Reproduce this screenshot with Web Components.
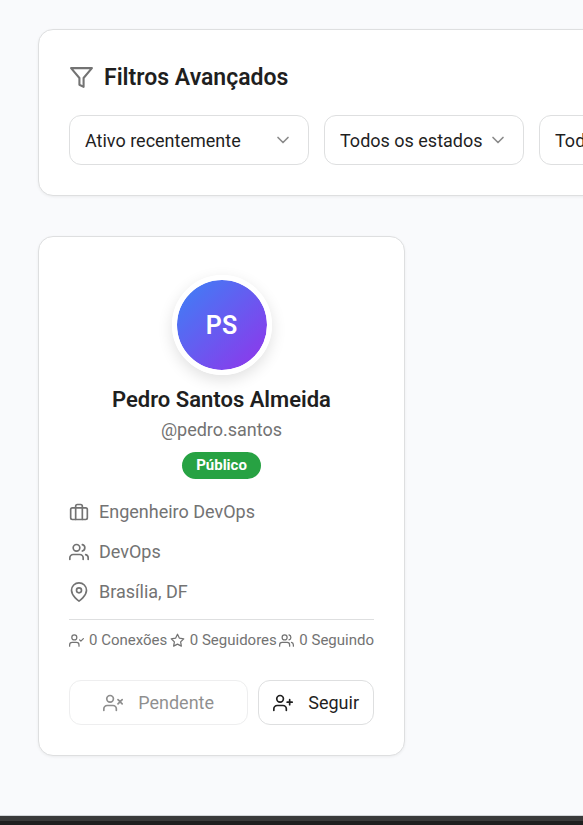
<!DOCTYPE html>
<html lang="pt-BR">
<head>
<meta charset="utf-8">
<meta name="viewport" content="width=device-width, initial-scale=1">
<title>Filtros Avançados</title>
<style>
  html { background: #f9fafc; }
  body {
    margin: 0;
    min-height: 100vh;
    display: flex;
    flex-direction: column;
    overflow: hidden;
    font: 18px/27px Roboto, "Liberation Sans", sans-serif;
    color: #1f1f1f;
    --muted: #737373;
    --line: #dedfe0;
    --surface: #ffffff;
    --success: #27a243;
  }
  main {
    display: flex;
    flex-direction: column;
    align-items: flex-start;
    gap: 40px;
    padding: 29px 38px 59px;
  }
</style>
</head>
<body>
<main>
  <filter-panel heading="Filtros Avançados">
    <filter-select wide label="Ordenação" value="Ativo recentemente"></filter-select>
    <filter-select label="Estado" value="Todos os estados"></filter-select>
    <filter-select label="Área" value="Todos"></filter-select>
  </filter-panel>
  <profile-card initials="PS">
    <span slot="name">Pedro Santos Almeida</span>
    <span slot="handle">@pedro.santos</span>
    <span slot="badge">Público</span>
    <info-row slot="info" icon="briefcase">Engenheiro DevOps</info-row>
    <info-row slot="info" icon="users">DevOps</info-row>
    <info-row slot="info" icon="pin">Brasília, DF</info-row>
    <info-row slot="stats" small icon="user-check">0 Conexões</info-row>
    <info-row slot="stats" small icon="star">0 Seguidores</info-row>
    <info-row slot="stats" small icon="users">0 Seguindo</info-row>
    <action-button slot="actions" grow disabled icon="user-x">Pendente</action-button>
    <action-button slot="actions" icon="user-plus">Seguir</action-button>
  </profile-card>
</main>
<page-footer></page-footer>

<script>
const person = '<path d="M16 21v-2a4 4 0 0 0-4-4H5a4 4 0 0 0-4 4v2"/><circle cx="8.5" cy="7" r="4"/>';
const ICONS = {
  filter: '<polygon points="22 3 2 3 10 12.46 10 19 14 21 14 12.46 22 3"/>',
  chevron: '<polyline points="6 9 12 15 18 9"/>',
  briefcase: '<rect x="2" y="7" width="20" height="14" rx="2"/><path d="M16 21V5a2 2 0 0 0-2-2h-4a2 2 0 0 0-2 2v16"/>',
  users: '<path d="M17 21v-2a4 4 0 0 0-4-4H5a4 4 0 0 0-4 4v2"/><circle cx="9" cy="7" r="4"/><path d="M23 21v-2a4 4 0 0 0-3-3.87M16 3.13a4 4 0 0 1 0 7.75"/>',
  pin: '<path d="M21 10c0 7-9 13-9 13s-9-6-9-13a9 9 0 0 1 18 0z"/><circle cx="12" cy="10" r="3"/>',
  star: '<polygon points="12 2 15.09 8.26 22 9.27 17 14.14 18.18 21.02 12 17.77 5.82 21.02 7 14.14 2 9.27 8.91 8.26 12 2"/>',
  'user-check': person + '<polyline points="17 11 19 13 23 9"/>',
  'user-x': person + '<path d="M18 8l5 5M23 8l-5 5"/>',
  'user-plus': person + '<path d="M20 8v6M23 11h-6"/>'
};

class Base extends HTMLElement {
  connectedCallback() {
    if (!this.shadowRoot) this.attachShadow({ mode: 'open' }).innerHTML = this.render();
  }
  attr(name) { return this.getAttribute(name) || ''; }
}

customElements.define('line-icon', class extends Base {
  render() {
    return `<style>
      :host { display: block; flex: none; width: var(--size, 20px); height: var(--size, 20px); }
      svg { display: block; width: 100%; height: 100%; fill: none; stroke: currentColor; stroke-width: 2; stroke-linecap: round; stroke-linejoin: round; }
    </style><svg viewBox="0 0 24 24" aria-hidden="true">${ICONS[this.attr('name')]}</svg>`;
  }
});

customElements.define('filter-panel', class extends Base {
  render() {
    return `<style>
      :host { display: flex; flex-direction: column; gap: 20px; padding: 30px; width: max-content;
        background: var(--surface); border: 1px solid var(--line); border-radius: 15px; box-shadow: 0 1px 3px rgba(0,0,0,.06); }
      header { display: flex; align-items: center; gap: 10px; }
      line-icon { --size: 25px; color: var(--muted); }
      h2 { margin: 0; font-size: 23px; line-height: 35px; font-weight: 600; }
      .fields { display: flex; gap: 15px; }
    </style>
    <header><line-icon name="filter"></line-icon><h2>${this.attr('heading')}</h2></header>
    <div class="fields"><slot></slot></div>`;
  }
});

customElements.define('filter-select', class extends Base {
  render() {
    return `<style>
      :host { display: grid; align-items: center; width: 200px; }
      :host([wide]) { width: 240px; }
      select, line-icon { grid-area: 1 / 1; }
      select { appearance: none; width: 100%; height: 50px; margin: 0; padding: 0 40px 0 15px; font: inherit; color: inherit;
        background: var(--surface); border: 1px solid var(--line); border-radius: 12px; }
      line-icon { justify-self: end; margin-right: 16px; color: #8a8a8a; pointer-events: none; }
    </style>
    <select aria-label="${this.attr('label')}"><option>${this.attr('value')}</option></select>
    <line-icon name="chevron"></line-icon>`;
  }
});

customElements.define('profile-card', class extends Base {
  render() {
    return `<style>
      :host { display: block; box-sizing: border-box; width: 100%; max-width: 367px; padding: 38px 30px 30px;
        background: var(--surface); border: 1px solid var(--line); border-radius: 15px; box-shadow: 0 1px 3px rgba(0,0,0,.06); }
      .head { display: flex; flex-direction: column; align-items: center; }
      .avatar { box-sizing: border-box; display: grid; place-items: center; width: 100px; height: 100px;
        border: 5px solid #fff; border-radius: 50%; color: #fff; font-size: 25px; font-weight: 600;
        background: linear-gradient(135deg, #3b82f6, #9333ea) padding-box; box-shadow: 0 5px 15px rgba(0,0,0,.12); }
      h3 { margin: 10px 0 0; font-size: 22px; line-height: 30px; font-weight: 600; }
      .handle { margin: 1px 0 9px; color: var(--muted); }
      .badge { padding: 0 14px; border-radius: 14px; background: var(--success); color: #fff; font-size: 15px; font-weight: 700; }
      .info { display: flex; flex-direction: column; gap: 13px; margin: 19px 0 14px; }
      .stats { display: flex; justify-content: space-between; padding: 9px 0 29px; border-top: 1px solid var(--line); }
      .actions { display: flex; gap: 10px; }
    </style>
    <div class="head">
      <div class="avatar">${this.attr('initials')}</div>
      <h3><slot name="name"></slot></h3>
      <div class="handle"><slot name="handle"></slot></div>
      <div class="badge"><slot name="badge"></slot></div>
    </div>
    <div class="info"><slot name="info"></slot></div>
    <div class="stats"><slot name="stats"></slot></div>
    <div class="actions"><slot name="actions"></slot></div>`;
  }
});

customElements.define('info-row', class extends Base {
  render() {
    return `<style>
      :host { display: flex; align-items: center; gap: 10px; color: var(--muted); white-space: nowrap; }
      :host([small]) { --size: 15px; gap: 5px; font-size: 15px; line-height: 22px; }
    </style><line-icon name="${this.attr('icon')}"></line-icon><span><slot></slot></span>`;
  }
});

customElements.define('action-button', class extends Base {
  render() {
    return `<style>
      :host { display: block; }
      :host([grow]) { flex: 1; }
      button { box-sizing: border-box; display: flex; align-items: center; justify-content: center; gap: 15px; width: 100%; height: 45px;
        padding: 0 14px; font: inherit; color: inherit; background: var(--surface); border: 1px solid var(--line); border-radius: 12px; cursor: pointer; }
      button:disabled { opacity: .5; cursor: default; }
    </style><button type="button" ${this.hasAttribute('disabled') ? 'disabled' : ''}><line-icon name="${this.attr('icon')}"></line-icon><slot></slot></button>`;
  }
});

customElements.define('page-footer', class extends Base {
  render() {
    return `<style>
      :host { display: block; flex: 1; min-height: 4px; background: #1e1e1e; border-top: 1px solid #d3d6d9; }
      div { height: 5px; background: #3a3a3a; }
    </style><div></div>`;
  }
});
</script>
</body>
</html>
